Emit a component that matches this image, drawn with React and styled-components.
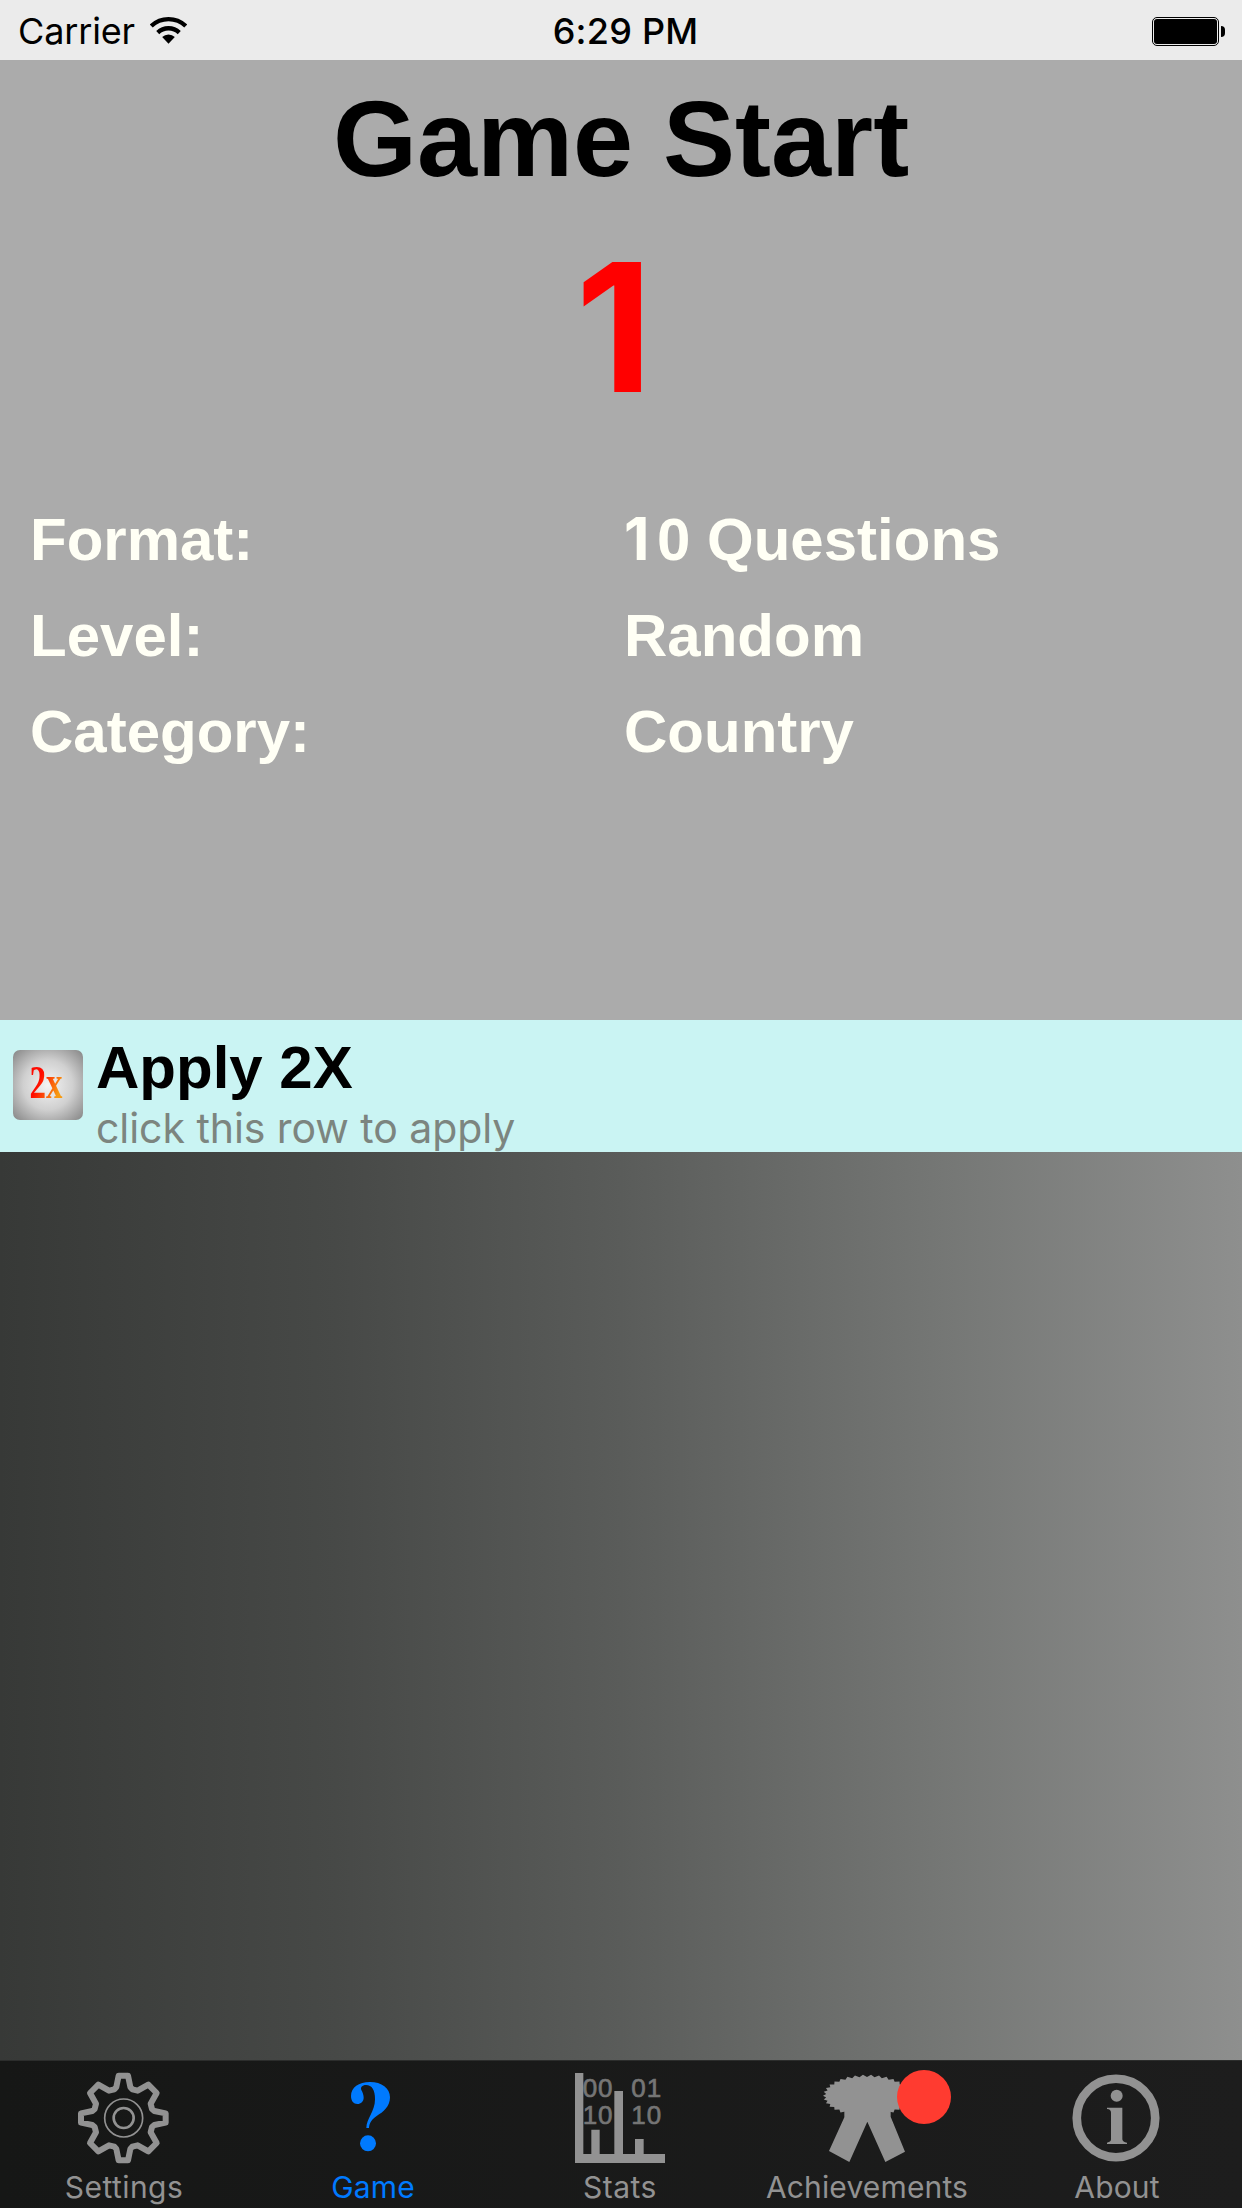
import React from "react";
import styled, { createGlobalStyle } from "styled-components";

const Global = createGlobalStyle`
  * { box-sizing: border-box; }
  body { margin: 0; }
`;
const sans = `"Liberation Sans", Arial, sans-serif`;
const ui = `Inter, "Liberation Sans", sans-serif`;

const Screen = styled.div`
  width: 1242px; height: 2208px; display: flex; flex-direction: column;
  overflow: hidden; font-family: ${sans}; background: #ababab;
`;
const StatusBar = styled.header`
  height: 60px; flex: none; display: grid; grid-template-columns: 1fr auto 1fr;
  align-items: center; padding: 1px 17px 0 18px; background: #ebebeb;
  font: 400 36px/59px ${ui}; color: #000;
`;
const Carrier = styled.div`
  display: flex; align-items: center; gap: 15px; padding-top: 1px; letter-spacing: -0.15px;
  svg { margin-top: -3px; }
`;
const Clock = styled.div`padding: 1px 0 0 8px; font-weight: 500; letter-spacing: 0.25px;`;
const Battery = styled.div`justify-self: end; display: flex; align-items: center; gap: 2px;`;
const Cell = styled.div`
  width: 67px; height: 29px; border: 1px solid #000; border-radius: 5px; padding: 1px;
  &::before { content: ""; display: block; height: 100%; background: #000; border-radius: 3px; }
`;
const Nub = styled.div`width: 4px; height: 11px; background: #000; border-radius: 0 4px 4px 0;`;

const Panel = styled.main`height: 960px; flex: none; background: #ababab;`;
const Title = styled.h1`margin: 0; text-align: center; font: 700 108px/157px ${sans}; color: #000;`;
const Count = styled.div`
  height: 225px; padding-right: 14px; text-align: center; font: 700 179px/221px ${ui}; color: #f00;
`;
const Details = styled.dl`
  margin: 50px 0 0; padding-left: 30px; display: grid; grid-template-columns: 594px 1fr;
  font: 700 60px/96px ${sans}; color: #fffff5;
`;
const Term = styled.dt``;
const Value = styled.dd`margin: 0;`;
const LeadOne = styled.span`display: inline-block; width: 33px; font: 700 59px/1 ${ui};`;

const PowerRow = styled.section`height: 132px; flex: none; display: flex; padding-left: 13px; gap: 13px; background: #caf4f3;`;
const PowerIcon = styled.div`
  width: 70px; height: 70px; margin-top: 30px; padding-right: 5px; border-radius: 7px;
  display: flex; justify-content: center;
  background: radial-gradient(circle, #f4f4f4 0%, #d0d0d0 50%, #848484 100%);
`;
const PowerGlyph = styled.span`
  font: 700 46px/66px "Liberation Serif", serif; transform: scaleX(0.72);
  background: linear-gradient(120deg, #ff0a00 35%, #f79a10 75%); background-clip: text; color: transparent;
`;
const PowerText = styled.div`padding-top: 11px;`;
const PowerTitle = styled.div`font: 700 60px/74px ${sans}; color: #000;`;
const PowerHint = styled.div`font: 400 41px/47px ${ui}; letter-spacing: -0.06px; color: #7c857f;`;

const Backdrop = styled.div`
  flex: 1;
  background: linear-gradient(90deg, #373937 0%, #474947 27%, #5a5c5a 50%, #747674 75%, #8e8f8e 100%);
`;
const TabBar = styled.nav`
  height: 148px; flex: none; display: grid; grid-template-columns: 248px 250px 244px 250px 250px;
  border-top: 1px solid #2c2d2c; background: linear-gradient(90deg, #161716, #1d1d1d);
`;
const Tab = styled.div`
  position: relative; display: flex; flex-direction: column; align-items: center; padding-top: 12px;
  color: ${(p) => (p.$active ? "#007aff" : "#929292")};
  svg { display: block; flex: none; overflow: visible; }
`;
const TabLabel = styled.span`
  margin-top: 3px; font: 400 30px/43px ${ui}; letter-spacing: ${(p) => p.$tracking ?? 0.15}px;
`;
const Badge = styled.i`position: absolute; left: 155px; top: 9px; width: 54px; height: 54px; border-radius: 50%; background: #ff3b30;`;

const Wifi = () => (
  <svg width="37" height="28" viewBox="450 46 111 84">
    <g fill="none" stroke="#000" strokeWidth="13">
      <path d="M453.7 76.2A74.5 74.5 0 0 1 557.3 76.2" />
      <path d="M473.2 95.7A46.5 46.5 0 0 1 537.8 95.7" />
    </g>
    <path d="M505.5 129L486.5 109A27 27 0 0 1 524.5 109Z" />
  </svg>
);

const quarter = "14,-127 21,-93 27,-86 43,-82 75,-100 100,-75 82,-43 86,-27 93,-21 127,-14"
  .split(" ").map((p) => p.split(",").map(Number));
const gear = [0, 1, 2, 3].flatMap((k) =>
  quarter.map(([x, y]) => (k === 0 ? [x, y] : k === 1 ? [-y, x] : k === 2 ? [-x, -y] : [y, -x]))
);
const GearIcon = () => (
  <svg width="90" height="90" viewBox="-133 -135 270 270" fill="none" stroke="currentColor">
    <polygon points={gear.join(" ")} strokeWidth="18" strokeLinejoin="round" />
    <circle cx="1" r="57" strokeWidth="5" />
    <circle cx="1" r="30" strokeWidth="8" />
  </svg>
);
const QuestionIcon = () => (
  <svg width="90" height="90" viewBox="234 99 270 270" fill="currentColor">
    <path d="M349 264C349 236 375 215 375 178C375 150 366 135 348 135C336 135 331 142 334 150C338 157 341 165 341 173C341 184 333 192 322 192C311 192 303 183 303 168C303 142 326 126 360 126C395 126 420 144 420 172C420 200 400 216 380 228C366 238 358 248 357 264Z" />
    <circle cx="354" cy="310" r="24" />
  </svg>
);
const Digits = styled.text`
  font: 400 78px ${sans}; letter-spacing: 3px; fill: #757575; stroke: #757575; stroke-width: 2px;
`;
const StatsIcon = () => (
  <svg width="90" height="90" viewBox="225 99 270 270" fill="currentColor">
    <Digits x="248" y="171">00</Digits>
    <Digits x="394" y="171">01</Digits>
    <Digits x="248" y="251">10</Digits>
    <Digits x="394" y="251">10</Digits>
    <path d="M225 99H250V342H274V269H299V342H343V153H369V342H405V297H431V342H495V369H225Z" />
  </svg>
);
const teeth = Array.from({ length: 68 }, (_, i) => {
  const a = (i / 68) * Math.PI * 2;
  const k = i % 2 ? 0 : 1;
  return [351 + Math.cos(a) * (123 + 9 * k), 167 + Math.sin(a) * (56 + 7 * k)].map((n) => n.toFixed(1));
});
const RibbonIcon = () => (
  <svg width="90" height="90" viewBox="216 99 270 270" fill="currentColor">
    <polygon points={teeth.join(" ")} />
    <path d="M283 210V232L237 333L298 366L352 245L406 366L465 335L422 230V210Z" />
  </svg>
);
const InfoIcon = () => (
  <svg width="90" height="90" viewBox="240 99 270 270" fill="currentColor">
    <circle cx="372" cy="234" r="117.7" fill="none" stroke="currentColor" strokeWidth="26" />
    <circle cx="374" cy="167" r="18" />
    <path d="M345 203H391V298Q392 307 405 308V312H345V308Q357 306 357 298V218Q357 208 345 207Z" />
  </svg>
);

const details = [
  ["Format:", <><LeadOne>1</LeadOne>0 Questions</>],
  ["Level:", "Random"],
  ["Category:", "Country"],
];
const tabs = [
  { label: "Settings", Icon: GearIcon, tracking: 0.45 },
  { label: "Game", Icon: QuestionIcon, active: true },
  { label: "Stats", Icon: StatsIcon, tracking: 0.5 },
  { label: "Achievements", Icon: RibbonIcon, badge: true },
  { label: "About", Icon: InfoIcon },
];

export default function App() {
  return (
    <Screen>
      <Global />
      <StatusBar>
        <Carrier>Carrier<Wifi /></Carrier>
        <Clock>6:29 PM</Clock>
        <Battery><Cell /><Nub /></Battery>
      </StatusBar>
      <Panel>
        <Title>Game Start</Title>
        <Count>1</Count>
        <Details>
          {details.map(([k, v]) => (
            <React.Fragment key={k}><Term>{k}</Term><Value>{v}</Value></React.Fragment>
          ))}
        </Details>
      </Panel>
      <PowerRow>
        <PowerIcon><PowerGlyph>2x</PowerGlyph></PowerIcon>
        <PowerText>
          <PowerTitle>Apply 2X</PowerTitle>
          <PowerHint>click this row to apply</PowerHint>
        </PowerText>
      </PowerRow>
      <Backdrop />
      <TabBar>
        {tabs.map(({ label, Icon, active, badge, tracking }) => (
          <Tab key={label} $active={active}>
            <Icon />
            <TabLabel $tracking={tracking}>{label}</TabLabel>
            {badge && <Badge />}
          </Tab>
        ))}
      </TabBar>
    </Screen>
  );
}
